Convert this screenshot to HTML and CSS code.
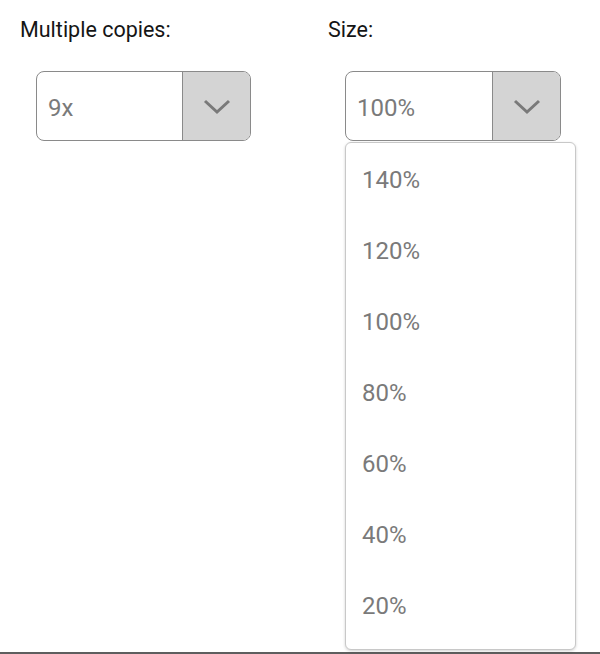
FILE: index.html
```html
<!DOCTYPE html>
<html>
<head>
<meta charset="utf-8">
<link rel="stylesheet" href="styles.css">
</head>
<body>
<div class="page">
  <div class="field">
    <div class="label">Multiple copies:</div>
    <div class="select">
      <div class="value">9x</div>
      <div class="btn">
        <svg width="28" height="16" viewBox="0 0 28 16"><path d="M2 2 L14 13 L26 2" fill="none" stroke="#7a7a7a" stroke-width="3"/></svg>
      </div>
    </div>
  </div>
  <div class="field field2">
    <div class="label">Size:</div>
    <div class="select">
      <div class="value">100%</div>
      <div class="btn">
        <svg width="28" height="16" viewBox="0 0 28 16"><path d="M2 2 L14 13 L26 2" fill="none" stroke="#7a7a7a" stroke-width="3"/></svg>
      </div>
    </div>
    <ul class="menu">
      <li>140%</li>
      <li>120%</li>
      <li>100%</li>
      <li>80%</li>
      <li>60%</li>
      <li>40%</li>
      <li>20%</li>
    </ul>
  </div>
</div>
</body>
</html>
```
FILE: styles.css
```css
html, body {
  margin: 0;
  padding: 0;
  background: #fff;
}
body {
  font-family: Roboto, "Noto Sans", sans-serif;
}
.page {
  box-sizing: border-box;
  height: 654px;
  border-bottom: 2px solid #5e5e5e;
  display: flex;
  padding-left: 20px;
}
.field {
  position: relative;
  width: 308px;
}
.field2 {
  width: 272px;
}
.label {
  font-size: 21.5px;
  color: #151515;
  margin-top: 17px;
  line-height: 26px;
}
.select {
  margin-top: 28px;
  margin-left: 16px;
  width: 215px;
  height: 70px;
  box-sizing: border-box;
  border: 1px solid #8a8a8a;
  border-radius: 8px;
  display: flex;
  overflow: hidden;
}
.field2 .select {
  margin-left: 17px;
  width: 216px;
}
.value {
  flex: 1;
  display: flex;
  align-items: center;
  padding-left: 11px;
  padding-top: 4px;
  font-size: 24px;
  color: #7a7a7a;
}
.btn {
  width: 67px;
  border-left: 1px solid #8a8a8a;
  background: #d4d4d4;
  display: flex;
  align-items: center;
  justify-content: center;
}
.btn svg {
  display: block;
  margin-top: 2px;
}
.menu {
  position: absolute;
  left: 17px;
  top: 142px;
  width: 231px;
  height: 508px;
  box-sizing: border-box;
  margin: 0;
  padding: 1px 0 0 0;
  list-style: none;
  background: #fff;
  border: 1px solid #c8c8c8;
  border-radius: 6px;
  box-shadow: 0 1px 3px rgba(0,0,0,0.18);
}
.menu li {
  height: 71px;
  display: flex;
  align-items: center;
  padding-left: 16px;
  font-size: 24px;
  color: #7a7a7a;
}
```
